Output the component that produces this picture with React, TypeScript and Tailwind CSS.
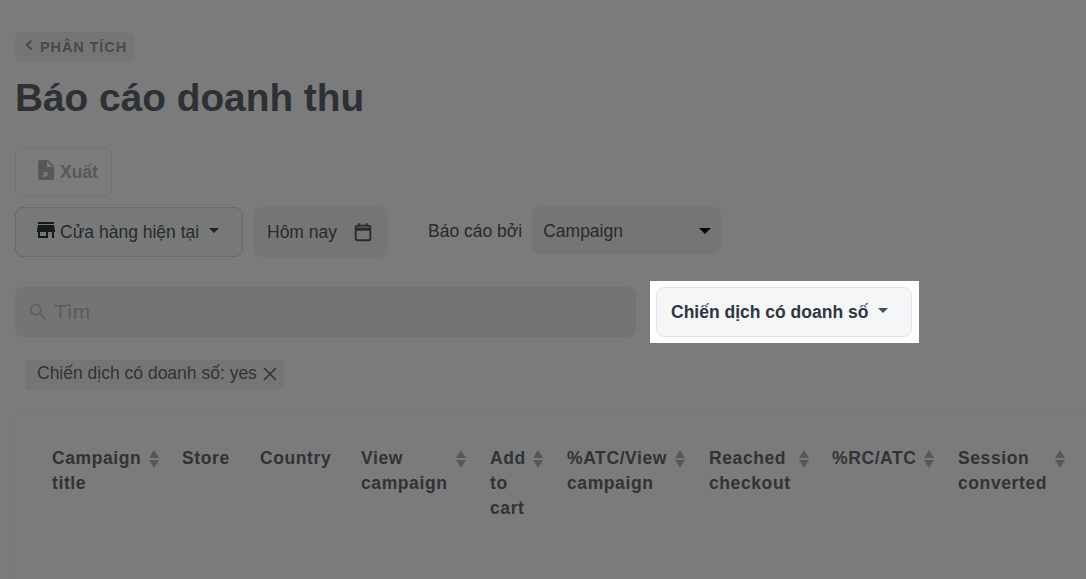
import { ChevronLeft, X } from 'lucide-react';

const columns = [
  { width: 'w-[130px]', iconPad: 'w-[108px]', lines: ['Campaign', 'title'], sortable: true },
  { width: 'w-[78px]', iconPad: 'w-auto', lines: ['Store'], sortable: false },
  { width: 'w-[101px]', iconPad: 'w-auto', lines: ['Country'], sortable: false },
  { width: 'w-[129px]', iconPad: 'w-[106px]', lines: ['View', 'campaign'], sortable: true },
  { width: 'w-[77px]', iconPad: 'w-[54px]', lines: ['Add', 'to', 'cart'], sortable: true },
  { width: 'w-[142px]', iconPad: 'w-[119px]', lines: ['%ATC/View', 'campaign'], sortable: true },
  { width: 'w-[123px]', iconPad: 'w-[101px]', lines: ['Reached', 'checkout'], sortable: true },
  { width: 'w-[126px]', iconPad: 'w-[103px]', lines: ['%RC/ATC'], sortable: true },
  { width: 'w-[128px]', iconPad: 'w-[108px]', lines: ['Session', 'converted'], sortable: true },
];

function SortIcon() {
  return (
    <svg viewBox="0 0 12 20" className="h-5 w-3 shrink-0 fill-[#b0b0b0]">
      <path d="M6 1l5 8H1z" />
      <path d="M6 19l-5-8h10z" />
    </svg>
  );
}

function Caret({ className }: { className: string }) {
  return (
    <svg viewBox="0 0 10 5" className={className}>
      <path d="M0 0h10L5 5z" />
    </svg>
  );
}

export default function App() {
  return (
    <div className="h-[579px] w-[1086px] overflow-hidden bg-[#f6f6f6] pl-[15px] pt-8 font-['Liberation_Sans',sans-serif] text-[#50555c]">
      <div className="flex h-[30px] w-[119px] items-center rounded-md bg-[#ebebeb] pl-[6px] pt-[2px] text-[14.5px] font-bold tracking-[0.9px] text-[#8f949a]">
        <ChevronLeft className="mb-[6px] mr-[3px] h-4 w-4" strokeWidth={3} />
        PHÂN TÍCH
      </div>

      <h1 className="mt-[13px] h-[45px] text-[38.8px] leading-[45px] font-bold text-[#5a6068]">Báo cáo doanh thu</h1>

      <div className="mt-[27px] flex h-[50px] w-[97px] items-center rounded-lg border border-[#e6e6e6] pl-[18px] text-[17.5px] font-bold text-[#aeb0b3]">
        <svg viewBox="0 0 24 24" className="mb-1 mr-[2px] h-6 w-6 fill-[#aeb0b3]">
          <path d="M14 2H6a2 2 0 0 0-2 2v16a2 2 0 0 0 2 2h12a2 2 0 0 0 2-2V8zm-1 7V3.5L18.5 9zm-4.5 10 1.6-3.4-1.6-1.6h5v5l-1.6-1.6L10 19z" />
        </svg>
        Xuất
      </div>

      <div className="mt-[10px] flex items-start">
        <div className="flex h-[50px] w-[228px] items-center rounded-lg border border-[#d2d6d6] bg-[#eef1f0] pl-[18px] text-[17.5px]">
          <svg viewBox="0 0 24 24" className="-mt-1 mr-[2px] h-6 w-6 shrink-0 fill-[#2f353b]">
            <path d="M20 4H4v2h16zm1 10v-2l-1-5H4l-1 5v2h1v6h10v-6h4v6h2v-6zm-9 4H6v-4h6z" />
          </svg>
          Cửa hàng hiện tại
          <Caret className="mb-1 ml-[10px] h-[5px] w-[10px] fill-[#3d4249]" />
        </div>

        <div className="ml-[10px] flex h-[50px] w-[135px] items-center rounded-lg bg-[#ebebeb] pl-[14px] text-[17.5px]">
          Hôm nay
          <svg viewBox="0 0 24 24" className="ml-[15px] h-[22px] w-[22px] fill-none stroke-[#50555c] stroke-2">
            <rect x="4" y="5" width="16" height="16" rx="2" />
            <path d="M4 8h16M4 9.5h16M8 2.5V6M16 2.5V6M8 14h.01M12 14h.01M16 14h.01" />
          </svg>
        </div>

        <div className="ml-10 flex h-12 items-center pt-[1px] text-[17.5px]">Báo cáo bởi</div>

        <div className="ml-[10px] flex h-12 w-[189px] items-center justify-between rounded-lg bg-[#ebebeb] pl-[11px] pr-[10px] text-[17.5px]">
          Campaign
          <Caret className="h-[6px] w-3 fill-[#111111]" />
        </div>
      </div>

      <div className="mt-[30px] flex items-start">
        <div className="flex h-[50px] w-[621px] items-center rounded-lg bg-[#e8e8e8] pl-3 text-[21px] text-[#b4b8bc]">
          <svg viewBox="0 0 24 24" className="mr-[5px] h-[22px] w-[22px] fill-[#bcbfc2]">
            <path d="M15.5 14h-.79l-.28-.27A6.47 6.47 0 0 0 16 9.5 6.5 6.5 0 1 0 9.5 16c1.61 0 3.09-.59 4.23-1.57l.27.28v.79l5 4.99L20.49 19zm-6 0C7.01 14 5 11.99 5 9.5S7.01 5 9.5 5 14 7.01 14 9.5 11.99 14 9.5 14z" />
          </svg>
          Tìm
        </div>

        {/* spotlight round the highlighted filter */}
        <div className="relative z-10 -mt-[6px] ml-[14px] bg-white py-[6px] pl-[6px] pr-[7px] shadow-[0_0_0_2000px_rgba(0,0,0,0.5)]">
          <button className="flex h-[50px] w-[256px] items-center rounded-lg border border-[#dfe3e8] bg-[#f4f6f8] pl-[14px] text-[17.5px] font-bold text-[#2f3640]">
            Chiến dịch có doanh số
            <Caret className="mb-1 ml-[10px] h-[5px] w-[10px] fill-[#4a5058]" />
          </button>
        </div>
      </div>

      <div className="mt-[17px] ml-[10px] flex h-[30px] w-[259px] items-center rounded bg-[#ebebeb] pb-[3px] pl-3 text-[17.5px] whitespace-nowrap text-[#63686f]">
        Chiến dịch có doanh số: yes
        <X className="ml-[2px] h-[22px] w-[22px]" strokeWidth={1.8} />
      </div>

      <div className="mt-5 h-[300px] w-[1200px] rounded-tl-xl border border-[#eeeeee] pt-[35px] pl-9">
        <div className="flex">
          {columns.map((col) => (
            <div key={col.lines[0]} className={`${col.width} shrink-0 text-[17.5px] leading-[25px] font-bold tracking-[0.6px] text-[#62676e]`}>
              {col.lines.map((line, i) => (
                <div key={line} className={i === 0 && col.sortable ? `${col.iconPad} flex items-center justify-between` : ''}>
                  {line}
                  {i === 0 && col.sortable && <SortIcon />}
                </div>
              ))}
            </div>
          ))}
        </div>
      </div>
    </div>
  );
}
